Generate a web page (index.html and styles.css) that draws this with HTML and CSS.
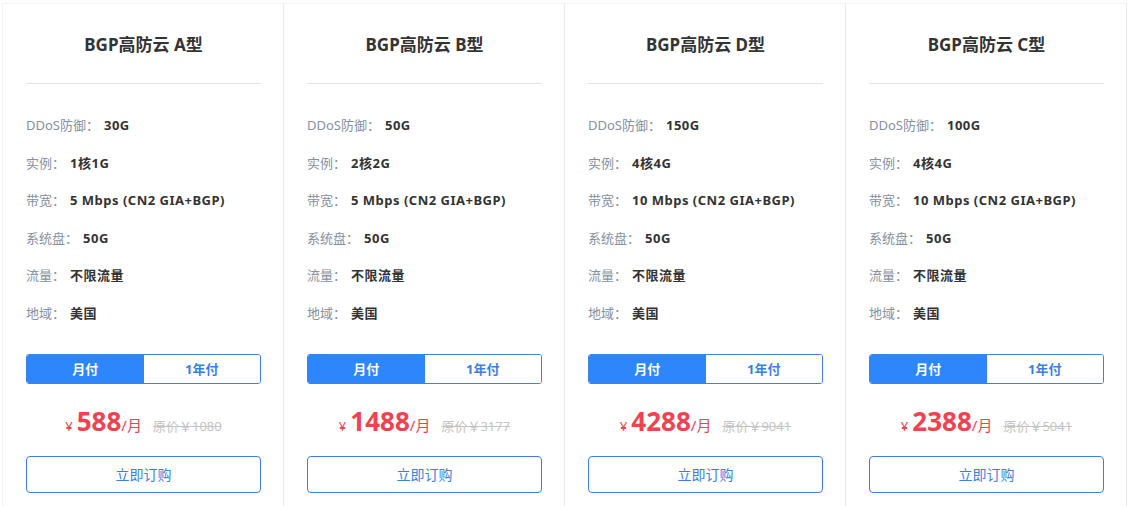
FILE: index.html
```html
<!DOCTYPE html>
<html lang="zh-CN">
<head>
    <meta charset="UTF-8">
    <meta name="viewport" content="width=device-width, initial-scale=1.0">
    <title>BGP高防云</title>
    <link rel="stylesheet" href="styles.css">
</head>
<body>
    <div class="plans">
        <div class="plan">
            <h3 class="plan-title">BGP高防云 A型</h3>
            <ul class="specs">
                <li><span class="label">DDoS防御：</span><strong>30G</strong></li>
                <li><span class="label">实例：</span><strong>1核1G</strong></li>
                <li><span class="label">带宽：</span><strong>5 Mbps (CN2 GIA+BGP)</strong></li>
                <li><span class="label">系统盘：</span><strong>50G</strong></li>
                <li><span class="label">流量：</span><strong>不限流量</strong></li>
                <li><span class="label">地域：</span><strong>美国</strong></li>
            </ul>
            <div class="toggle">
                <span class="toggle-item active">月付</span>
                <span class="toggle-item">1年付</span>
            </div>
            <div class="price">
                <span class="currency">¥</span><span class="amount">588</span><span class="unit">/月</span>
                <del class="old-price">原价￥1080</del>
            </div>
            <a href="#" class="buy">立即订购</a>
        </div>

        <div class="plan">
            <h3 class="plan-title">BGP高防云 B型</h3>
            <ul class="specs">
                <li><span class="label">DDoS防御：</span><strong>50G</strong></li>
                <li><span class="label">实例：</span><strong>2核2G</strong></li>
                <li><span class="label">带宽：</span><strong>5 Mbps (CN2 GIA+BGP)</strong></li>
                <li><span class="label">系统盘：</span><strong>50G</strong></li>
                <li><span class="label">流量：</span><strong>不限流量</strong></li>
                <li><span class="label">地域：</span><strong>美国</strong></li>
            </ul>
            <div class="toggle">
                <span class="toggle-item active">月付</span>
                <span class="toggle-item">1年付</span>
            </div>
            <div class="price">
                <span class="currency">¥</span><span class="amount">1488</span><span class="unit">/月</span>
                <del class="old-price">原价￥3177</del>
            </div>
            <a href="#" class="buy">立即订购</a>
        </div>

        <div class="plan">
            <h3 class="plan-title">BGP高防云 D型</h3>
            <ul class="specs">
                <li><span class="label">DDoS防御：</span><strong>150G</strong></li>
                <li><span class="label">实例：</span><strong>4核4G</strong></li>
                <li><span class="label">带宽：</span><strong>10 Mbps (CN2 GIA+BGP)</strong></li>
                <li><span class="label">系统盘：</span><strong>50G</strong></li>
                <li><span class="label">流量：</span><strong>不限流量</strong></li>
                <li><span class="label">地域：</span><strong>美国</strong></li>
            </ul>
            <div class="toggle">
                <span class="toggle-item active">月付</span>
                <span class="toggle-item">1年付</span>
            </div>
            <div class="price">
                <span class="currency">¥</span><span class="amount">4288</span><span class="unit">/月</span>
                <del class="old-price">原价￥9041</del>
            </div>
            <a href="#" class="buy">立即订购</a>
        </div>

        <div class="plan">
            <h3 class="plan-title">BGP高防云 C型</h3>
            <ul class="specs">
                <li><span class="label">DDoS防御：</span><strong>100G</strong></li>
                <li><span class="label">实例：</span><strong>4核4G</strong></li>
                <li><span class="label">带宽：</span><strong>10 Mbps (CN2 GIA+BGP)</strong></li>
                <li><span class="label">系统盘：</span><strong>50G</strong></li>
                <li><span class="label">流量：</span><strong>不限流量</strong></li>
                <li><span class="label">地域：</span><strong>美国</strong></li>
            </ul>
            <div class="toggle">
                <span class="toggle-item active">月付</span>
                <span class="toggle-item">1年付</span>
            </div>
            <div class="price">
                <span class="currency">¥</span><span class="amount">2388</span><span class="unit">/月</span>
                <del class="old-price">原价￥5041</del>
            </div>
            <a href="#" class="buy">立即订购</a>
        </div>
    </div>
</body>
</html>
```

FILE: styles.css
```css
body {
    margin: 0;
    padding: 3px 0 0 2px;
    background: #fff;
    font-family: "Noto Sans", "Noto Sans CJK SC", sans-serif;
    color: #333;
}
.plans {
    display: grid;
    grid-template-columns: repeat(4, 281px);
    border-top: 1px solid #f3f3f3;
    border-left: 1px solid #f3f3f3;
    width: max-content;
}
.plan {
    padding: 29px 22px 0 23px;
    border-right: 1px solid #e9e9e9;
    height: 502px;
    box-sizing: border-box;
}
.plan-title {
    margin: 0;
    font-size: 17px;
    line-height: 24px;
    font-weight: bold;
    text-align: center;
    color: #333;
    padding-bottom: 26px;
    border-bottom: 1px solid #e4e4e4;
}
.specs {
    list-style: none;
    margin: 31px 0 0;
    padding: 0;
}
.specs li {
    font-size: 13px;
    line-height: 20px;
    height: 20px;
    margin-bottom: 17.6px;
}
.specs li:last-child {
    margin-bottom: 0;
}
.label {
    color: #8590a0;
}
.specs strong {
    margin-left: 5px;
    font-weight: bold;
    letter-spacing: 0.5px;
    color: #333;
}
.toggle {
    display: flex;
    margin-top: 31px;
    height: 30px;
    border: 1px solid #3a82e6;
    border-radius: 3px;
    overflow: hidden;
    box-sizing: border-box;
}
.toggle-item {
    flex: 1;
    text-align: center;
    font-size: 13px;
    line-height: 28px;
    font-weight: bold;
    color: #3a7fe2;
    background: #fff;
}
.toggle-item.active {
    background: #2e86fb;
    color: #fff;
}
.price {
    margin-top: 19px;
    height: 36px;
    display: flex;
    justify-content: center;
    align-items: baseline;
    color: #f2414f;
}
.currency {
    font-size: 13px;
    margin-right: 4px;
}
.amount {
    font-size: 26px;
    line-height: 36px;
    font-weight: bold;
}
.unit {
    font-size: 15px;
}
.old-price {
    margin-left: 11px;
    font-size: 13px;
    color: #c4c4c4;
}
.buy {
    display: block;
    margin-top: 17px;
    height: 37px;
    line-height: 35px;
    box-sizing: border-box;
    border: 1px solid #3a7fe0;
    border-radius: 4px;
    text-align: center;
    font-size: 14px;
    color: #3a7fe0;
    text-decoration: none;
}
```
